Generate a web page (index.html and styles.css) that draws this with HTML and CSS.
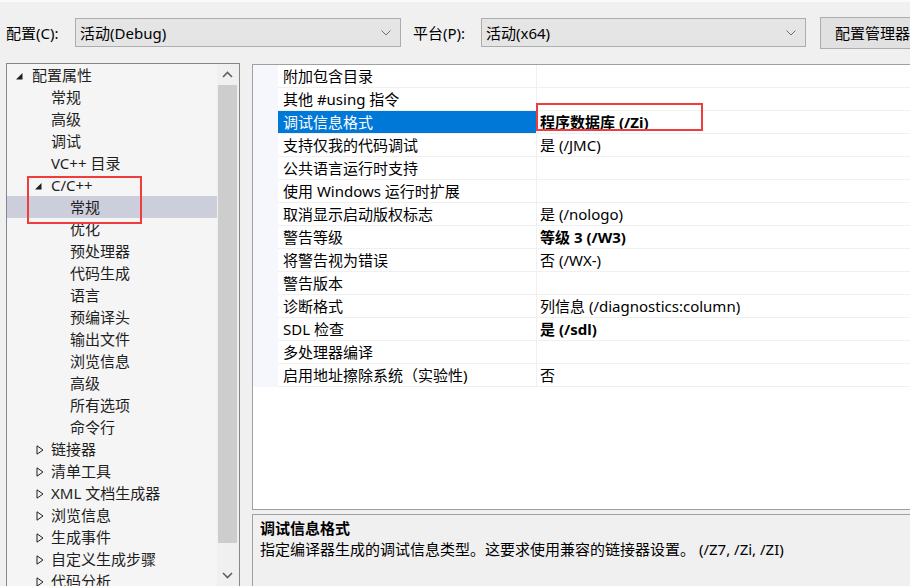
FILE: index.html
```html
<!DOCTYPE html>
<html>
<head>
    <meta charset="utf-8">
    <link rel="stylesheet" href="styles.css">
</head>
<body>
<div class="window">
    <div class="toolbar">
        <span class="tb-label">配置(C):</span>
        <div class="combo combo-config">
            <span>活动(Debug)</span>
            <svg width="10" height="6" viewBox="0 0 10 6"><polyline points="0.5,0.5 5,5 9.5,0.5" fill="none" stroke="#707070"/></svg>
        </div>
        <span class="tb-label tb-platform">平台(P):</span>
        <div class="combo combo-platform">
            <span>活动(x64)</span>
            <svg width="10" height="6" viewBox="0 0 10 6"><polyline points="0.5,0.5 5,5 9.5,0.5" fill="none" stroke="#707070"/></svg>
        </div>
        <button class="btn">配置管理器</button>
    </div>

    <div class="main">
        <div class="tree-panel">
            <ul class="tree">
                <li class="lvl0"><span class="toggle"><svg width="7" height="7" viewBox="0 0 7 7"><polygon points="6.5,0 6.5,6.5 0,6.5" fill="#1e1e1e"/></svg></span>配置属性</li>
                <li class="lvl1"><span class="toggle"></span>常规</li>
                <li class="lvl1"><span class="toggle"></span>高级</li>
                <li class="lvl1"><span class="toggle"></span>调试</li>
                <li class="lvl1"><span class="toggle"></span>VC++ 目录</li>
                <li class="lvl1"><span class="toggle"><svg width="7" height="7" viewBox="0 0 7 7"><polygon points="6.5,0 6.5,6.5 0,6.5" fill="#1e1e1e"/></svg></span>C/C++</li>
                <li class="lvl2 selected"><span class="toggle"></span>常规</li>
                <li class="lvl2"><span class="toggle"></span>优化</li>
                <li class="lvl2"><span class="toggle"></span>预处理器</li>
                <li class="lvl2"><span class="toggle"></span>代码生成</li>
                <li class="lvl2"><span class="toggle"></span>语言</li>
                <li class="lvl2"><span class="toggle"></span>预编译头</li>
                <li class="lvl2"><span class="toggle"></span>输出文件</li>
                <li class="lvl2"><span class="toggle"></span>浏览信息</li>
                <li class="lvl2"><span class="toggle"></span>高级</li>
                <li class="lvl2"><span class="toggle"></span>所有选项</li>
                <li class="lvl2"><span class="toggle"></span>命令行</li>
                <li class="lvl1"><span class="toggle closed"><svg width="8" height="10" viewBox="0 0 8 10"><polygon points="1,0.8 7,5 1,9.2" fill="none" stroke="#1e1e1e"/></svg></span>链接器</li>
                <li class="lvl1"><span class="toggle closed"><svg width="8" height="10" viewBox="0 0 8 10"><polygon points="1,0.8 7,5 1,9.2" fill="none" stroke="#1e1e1e"/></svg></span>清单工具</li>
                <li class="lvl1"><span class="toggle closed"><svg width="8" height="10" viewBox="0 0 8 10"><polygon points="1,0.8 7,5 1,9.2" fill="none" stroke="#1e1e1e"/></svg></span>XML 文档生成器</li>
                <li class="lvl1"><span class="toggle closed"><svg width="8" height="10" viewBox="0 0 8 10"><polygon points="1,0.8 7,5 1,9.2" fill="none" stroke="#1e1e1e"/></svg></span>浏览信息</li>
                <li class="lvl1"><span class="toggle closed"><svg width="8" height="10" viewBox="0 0 8 10"><polygon points="1,0.8 7,5 1,9.2" fill="none" stroke="#1e1e1e"/></svg></span>生成事件</li>
                <li class="lvl1"><span class="toggle closed"><svg width="8" height="10" viewBox="0 0 8 10"><polygon points="1,0.8 7,5 1,9.2" fill="none" stroke="#1e1e1e"/></svg></span>自定义生成步骤</li>
                <li class="lvl1"><span class="toggle closed"><svg width="8" height="10" viewBox="0 0 8 10"><polygon points="1,0.8 7,5 1,9.2" fill="none" stroke="#1e1e1e"/></svg></span>代码分析</li>
            </ul>
            <div class="vscroll">
                <div class="sb-btn"><svg width="11" height="7" viewBox="0 0 11 7"><polyline points="1,6 5.5,1.5 10,6" fill="none" stroke="#606060" stroke-width="1.6"/></svg></div>
                <div class="sb-thumb"></div>
                <div class="sb-track"></div>
                <div class="sb-btn"><svg width="11" height="7" viewBox="0 0 11 7"><polyline points="1,1 5.5,5.5 10,1" fill="none" stroke="#606060" stroke-width="1.6"/></svg></div>
            </div>
            <div class="mark mark-tree"></div>
        </div>

        <div class="right">
            <div class="grid">
                <div class="row"><div class="gutter"></div><div class="pname">附加包含目录</div><div class="pvalue"></div></div>
                <div class="row"><div class="gutter"></div><div class="pname">其他 #using 指令</div><div class="pvalue"></div></div>
                <div class="row selected"><div class="gutter"></div><div class="pname">调试信息格式</div><div class="pvalue bold">程序数据库 (/Zi)</div></div>
                <div class="row"><div class="gutter"></div><div class="pname">支持仅我的代码调试</div><div class="pvalue">是 (/JMC)</div></div>
                <div class="row"><div class="gutter"></div><div class="pname">公共语言运行时支持</div><div class="pvalue"></div></div>
                <div class="row"><div class="gutter"></div><div class="pname">使用 Windows 运行时扩展</div><div class="pvalue"></div></div>
                <div class="row"><div class="gutter"></div><div class="pname">取消显示启动版权标志</div><div class="pvalue">是 (/nologo)</div></div>
                <div class="row"><div class="gutter"></div><div class="pname">警告等级</div><div class="pvalue bold">等级 3 (/W3)</div></div>
                <div class="row"><div class="gutter"></div><div class="pname">将警告视为错误</div><div class="pvalue">否 (/WX-)</div></div>
                <div class="row"><div class="gutter"></div><div class="pname">警告版本</div><div class="pvalue"></div></div>
                <div class="row"><div class="gutter"></div><div class="pname">诊断格式</div><div class="pvalue">列信息 (/diagnostics:column)</div></div>
                <div class="row"><div class="gutter"></div><div class="pname">SDL 检查</div><div class="pvalue bold">是 (/sdl)</div></div>
                <div class="row"><div class="gutter"></div><div class="pname">多处理器编译</div><div class="pvalue"></div></div>
                <div class="row"><div class="gutter"></div><div class="pname">启用地址擦除系统（实验性)</div><div class="pvalue">否</div></div>
                <div class="mark mark-grid"></div>
            </div>
            <div class="desc">
                <div class="desc-title">调试信息格式</div>
                <div class="desc-text">指定编译器生成的调试信息类型。这要求使用兼容的链接器设置。 (/Z7, /Zi, /ZI)</div>
            </div>
        </div>
    </div>
</div>
</body>
</html>
```

FILE: styles.css
```css
html, body {
    margin: 0;
    padding: 0;
}
body {
    background: #f0f0f0;
    font-family: "Noto Sans", "Noto Sans CJK SC", sans-serif;
    font-size: 15px;
    color: #000;
    overflow: hidden;
}
.window {
    width: 910px;
    height: 586px;
    box-sizing: border-box;
    border-top: 2px solid #fafafa;
    overflow: hidden;
}

/* top bar */
.toolbar {
    display: flex;
    align-items: center;
    height: 61px;
    padding-left: 6px;
    white-space: nowrap;
}
.tb-label {
    flex: none;
    width: 69px;
    line-height: 20px;
}
.tb-platform {
    width: 68px;
    margin-left: 12px;
}
.combo {
    flex: none;
    box-sizing: border-box;
    height: 29px;
    border: 1px solid #adadad;
    background: #e5e5e5;
    display: flex;
    align-items: center;
    justify-content: space-between;
    padding: 0 9px 0 4px;
}
.combo-config {
    width: 326px;
}
.combo-platform {
    width: 325px;
}
.btn {
    flex: none;
    margin-left: 14px;
    height: 32px;
    width: 120px;
    border: 1px solid #adadad;
    background: #e1e1e1;
    font: inherit;
    color: #000;
    text-align: left;
    padding: 0 0 0 14px;
}

/* main area */
.main {
    display: flex;
    align-items: flex-start;
    padding-left: 6px;
    gap: 12px;
}
.tree-panel {
    position: relative;
    flex: none;
    display: flex;
    width: 234px;
    height: 524px;
    box-sizing: border-box;
    border: 1px solid #828790;
    background: #f5f5f5;
}
.tree {
    list-style: none;
    margin: 0;
    padding: 0;
    flex: 1;
    color: #1e1e1e;
    white-space: nowrap;
}
.tree li {
    display: flex;
    align-items: center;
    height: 22px;
    line-height: 22px;
}
.tree .lvl0 {
    padding-left: 6px;
}
.tree .lvl1 {
    padding-left: 25px;
}
.tree .lvl2 {
    padding-left: 44px;
}
.tree li.selected {
    background: #cccedb;
}
.toggle {
    flex: none;
    width: 19px;
    box-sizing: border-box;
    padding-left: 3px;
    display: flex;
    align-items: center;
}
.toggle svg {
    margin-top: 2px;
}
.toggle.closed {
    padding-left: 4px;
}
.toggle.closed svg {
    margin-top: 1px;
}

.vscroll {
    flex: none;
    width: 22px;
    background: #f0f0f0;
    display: flex;
    flex-direction: column;
}
.sb-btn {
    height: 21px;
    display: flex;
    align-items: center;
    justify-content: center;
    padding-right: 1px;
}
.sb-thumb {
    height: 458px;
    margin: 0 2px 0 1px;
    background: #cdcdcd;
}
.sb-track {
    flex: 1;
}

.right {
    flex: none;
    width: 700px;
    margin-top: 1px;
}
.grid {
    position: relative;
    box-sizing: border-box;
    height: 446px;
    border: 1px solid #a0a0a0;
    background: #fff;
}
.row {
    display: flex;
    height: 23px;
    white-space: nowrap;
}
.gutter {
    flex: none;
    width: 25px;
    background: #f5f7fc;
}
.pname {
    flex: none;
    width: 259px;
    box-sizing: border-box;
    padding-left: 5px;
    line-height: 22px;
    border-right: 1px solid #f0f0f0;
    border-bottom: 1px solid #f0f0f0;
}
.pvalue {
    flex: 1;
    padding-left: 3px;
    line-height: 22px;
    border-bottom: 1px solid #f0f0f0;
}
.row.selected .pname {
    background: #0078d7;
    color: #fff;
}
.bold {
    font-weight: bold;
}

.desc {
    margin-top: 4px;
    box-sizing: border-box;
    height: 90px;
    border: 1px solid #a0a0a0;
    background: #f0f0f0;
    padding: 3px 7px;
}
.desc-title {
    font-weight: bold;
    line-height: 20px;
}
.desc-text {
    line-height: 23px;
}

/* red annotation boxes */
.mark {
    position: absolute;
    box-sizing: border-box;
    border: 2px solid #f03c3c;
}
.mark-tree {
    left: 20px;
    top: 112px;
    width: 115px;
    height: 48px;
}
.mark-grid {
    left: 283px;
    top: 38px;
    width: 167px;
    height: 28px;
}
```
